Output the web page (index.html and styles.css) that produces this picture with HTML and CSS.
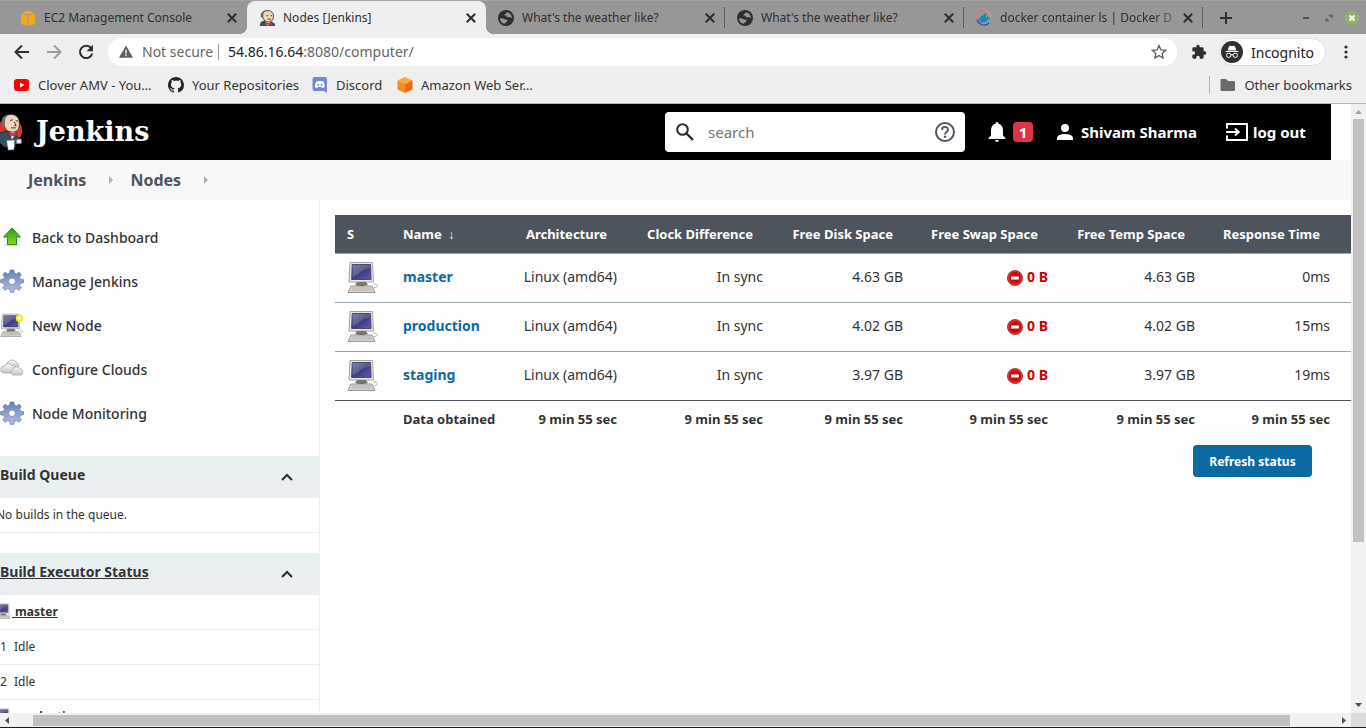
FILE: index.html
```html
<!DOCTYPE html>
<html lang="en">
<head>
<meta charset="utf-8">
<title>Nodes [Jenkins]</title>
<link rel="stylesheet" href="styles.css">
</head>
<body>
<svg class="defs" aria-hidden="true">
  <defs>
    <linearGradient id="screen" x1="0" y1="0" x2="1" y2="1"><stop offset="0" stop-color="#6a6a9c"/><stop offset=".5" stop-color="#3d3d7c"/><stop offset="1" stop-color="#5c5cb0"/></linearGradient>
    <linearGradient id="gearfill" x1="0" y1="0" x2="0" y2="1"><stop offset="0" stop-color="#6281b4"/><stop offset=".45" stop-color="#8c9cc9"/><stop offset="1" stop-color="#b9b9de"/></linearGradient>
    <linearGradient id="greenfill" x1="0" y1="0" x2="0" y2="1"><stop offset="0" stop-color="#2f9a10"/><stop offset="1" stop-color="#7edb25"/></linearGradient>
    <linearGradient id="cloudfill" x1="0" y1="0" x2="0" y2="1"><stop offset="0" stop-color="#fafafa"/><stop offset="1" stop-color="#c4c4c0"/></linearGradient>
    <linearGradient id="ring" x1="0" y1="0" x2="1" y2="1"><stop offset="0" stop-color="#e8506a"/><stop offset=".5" stop-color="#f0a080"/><stop offset="1" stop-color="#25b8b0"/></linearGradient>
  </defs>
  <symbol id="close" viewBox="0 0 10 10"><path d="M1.5 1.5l7 7M8.500 1.500l-7 7" fill="none" stroke="currentColor" stroke-width="1.700"/></symbol>
  <symbol id="globe" viewBox="0 0 24 24"><path fill="currentColor" d="M12 0a12 12 0 1 0 0 24 12 12 0 0 0 0-24z"/><path fill="#979797" d="M13 3.200c4 .4 7.500 3.800 7.900 8-1 1-2 .6-2.900-.2-1-.9-2.400.2-3.600 0-1.500-.3-1-2-2.400-2.500-1-.4-2.500.2-2.300-1.300.2-1.500 2-1 2.600-2 .3-.7.200-1.400.7-2zM3 13c1.300-.6 3-.5 4.300-.2 1.600.4 2.300 1.500 4 1.500 1.500 0 3 .6 2.700 2.200-.3 1.700-2 1.500-2.800 2.600-.4.600-.4 1.300-1 1.700C6 19.800 3 16.800 3 13z"/></symbol>
  <symbol id="computer" viewBox="0 0 32 32">
    <path d="M26 23c4 0 5 1 4 2.500s-4 .5-4 2" fill="none" stroke="#b4b4b0"/>
    <path d="M3 1.500h22.500l1 19.500H2z" fill="#e8e8e4" stroke="#a4a4a0"/>
    <path d="M5.200 3.500h18.300l.6 15H4.600z" fill="url(#screen)" stroke="#33335c" stroke-width=".8"/>
    <path d="M5.500 16C12 15 12 9 23.300 7V4H5.700z" fill="#fff" opacity=".16"/>
    <path d="M10 21h9l2 3H8z" fill="#777a72"/><path d="M8 24q6.500 2 13 0z" fill="#30322e"/>
    <path d="M4 25h21l3 6.500H1z" fill="#d6d6d2" stroke="#989894"/><path d="M5 27h19M4 29h21" stroke="#aaaaa6" stroke-width=".8"/>
  </symbol>
  <symbol id="gear" viewBox="0 0 24 24">
    <path d="M10.300 1h3.400l.6 3.100 2.100.9 2.700-1.800 2.200 2.300-1.700 2.600.9 2.100 3 .5v3l-3 .6-.9 2.200 1.700 2.600-2.300 2.200-2.600-1.700-2.100.8-.6 2.900h-3.200l-.6-2.900-2.200-.8-2.600 1.700-2.300-2.300 1.800-2.600-.9-2.100-3-.6v-3l3-.6.900-2.100-1.700-2.600L5.100 3.200 7.700 5l2-.9z" fill="url(#gearfill)" stroke="#6d7fae" stroke-width=".8"/>
    <circle cx="12" cy="12.300" r="3.300" fill="#fff" stroke="#7d8ab8" stroke-width=".8"/>
  </symbol>
  <symbol id="stop" viewBox="0 0 16 16"><circle cx="8" cy="8" r="7.600" fill="#cc0a0a" stroke="#8d0d0d" stroke-width=".6"/><circle cx="8" cy="8" r="6.500" fill="none" stroke="#ed5a5a" stroke-width=".7"/><rect x="4" y="6.500" width="8" height="3" fill="#fff"/></symbol>
  <symbol id="chevron" viewBox="0 0 14 10"><path d="M2 8l5-5 5 5" fill="none" stroke="#2b2b2b" stroke-width="2"/></symbol>
</svg>

<div class="browser">
  <div class="tabstrip">
    <div class="tab">
      <svg class="fav" viewBox="0 0 16 16"><path fill="#f5a81c" d="M1 4l6.500 1.500V16L1 14zM15 4L8.500 5.500V16l6.500-2zM2 3l6-2.500L14 3 8 4.500z"/></svg>
      <span class="tab-title">EC2 Management Console</span>
      <button class="tab-close" aria-label="Close tab"><svg><use href="#close"/></svg></button>
    </div>
    <div class="tab active">
      <svg class="fav" viewBox="1 0 28 28"><path d="M2 28l2-7 7-3 12 2 6 4v4z" fill="#335061"/><path d="M12 19l4 9 6-9z" fill="#eee"/><path d="M5 12C4 4 9 1 16 1c8 0 10.500 5 10.300 10.500C26 17 23.500 21 18 21c-6 0-8-3-9-6z" fill="#f0d6b7" stroke="#31302e" stroke-width="1.500"/><path d="M5 12C3 5 8 2 13 1.500c-4 3-5 6-4 13z" fill="#70706c"/><path d="M14 10h3M21 10h3M16 16h6" stroke="#31302e" stroke-width="1.500"/><path d="M12 21l6 2 6-2v6l-6-2-6 2z" fill="#d33833"/></svg>
      <span class="tab-title">Nodes [Jenkins]</span>
      <button class="tab-close" aria-label="Close tab"><svg><use href="#close"/></svg></button>
    </div>
    <div class="tab divided">
      <svg class="fav"><use href="#globe"/></svg>
      <span class="tab-title">What's the weather like?</span>
      <button class="tab-close" aria-label="Close tab"><svg><use href="#close"/></svg></button>
    </div>
    <div class="tab divided">
      <svg class="fav"><use href="#globe"/></svg>
      <span class="tab-title">What's the weather like?</span>
      <button class="tab-close" aria-label="Close tab"><svg><use href="#close"/></svg></button>
    </div>
    <div class="tab divided">
      <svg class="fav" viewBox="0 0 16 16"><circle cx="8" cy="8" r="7.300" fill="none" stroke="url(#ring)" stroke-width="1.200"/><path d="M1 9.500a7.200 7.200 0 0 0 12 3.500" fill="none" stroke="#3a3f8f" stroke-width="1.200"/><path fill="#1488c6" d="M2.500 8h2V6h2V5H8V3.500h2V8h1c.4-.5.300-1.300 0-2 .8.200 1.200.8 1.200 1.400.8-.1 1.300 0 1.800.4-.4.800-1 1-1.800 1-.8 2.500-2.600 3.700-5 3.700-3 0-4.500-1.500-4.700-4.500z"/></svg>
      <span class="tab-title fade">docker container ls | Docker D</span>
      <button class="tab-close" aria-label="Close tab"><svg><use href="#close"/></svg></button>
    </div>
    <button class="new-tab" aria-label="New tab"><svg viewBox="0 0 12 12"><path d="M6 0v12M0 6h12" stroke="currentColor" stroke-width="2"/></svg></button>
    <div class="window-controls">
      <button aria-label="Minimize"><svg viewBox="0 0 14 14"><path d="M4 7h6" stroke="#555" stroke-width="2"/></svg></button>
      <button aria-label="Restore"><svg viewBox="0 0 14 14"><path d="M7 4h3v3zM4 7v3h3z" fill="#626262" stroke="#626262"/></svg></button>
      <button aria-label="Close window"><svg viewBox="0 0 14 14"><circle cx="7" cy="7" r="7" fill="#8fb36b"/><path d="M4.500 4.500l5 5M9.500 4.500l-5 5" stroke="#fff" stroke-width="2"/></svg></button>
    </div>
  </div>

  <div class="toolbar">
    <button class="nav" aria-label="Back"><svg viewBox="0 0 16 16"><path d="M15 8H2M8 1.500L1.500 8 8 14.500" fill="none" stroke="#2e2e2e" stroke-width="2"/></svg></button>
    <button class="nav" aria-label="Forward" disabled><svg viewBox="0 0 16 16"><path d="M1 8h13M8 1.500L14.500 8 8 14.500" fill="none" stroke="#9c9c9c" stroke-width="2"/></svg></button>
    <button class="nav" aria-label="Reload"><svg viewBox="0 0 16 16"><path d="M13.200 4.200A6.200 6.200 0 1 0 14.200 9.500" fill="none" stroke="#2e2e2e" stroke-width="2"/><path d="M15 .8v6.400H8.600z" fill="#2e2e2e"/></svg></button>
    <div class="address">
      <svg class="warn" viewBox="0 0 16 14"><path d="M8 0l8 14H0z" fill="#5f5f5f"/><path d="M8 5v4.500M8 10.500v2" stroke="#fff" stroke-width="1.600"/></svg>
      <span class="insecure">Not secure</span>
      <div class="url" role="textbox" aria-label="Address" tabindex="0"><b>54.86.16.64</b>:8080/computer/</div>
      <button class="star" aria-label="Bookmark this page"><svg viewBox="0 0 16 16"><path d="M8 1.500l1.900 4.300 4.700.5-3.500 3.100 1 4.600L8 11.600 3.900 14l1-4.600L1.400 6.300l4.700-.5z" fill="none" stroke="#5f5f5f" stroke-width="1.300"/></svg></button>
    </div>
    <button class="puzzle" aria-label="Extensions"><svg viewBox="0 0 24 24"><path fill="#2e2e2e" d="M20.500 11H19V7a2 2 0 0 0-2-2h-4V3.500a2.500 2.500 0 0 0-5 0V5H4a2 2 0 0 0-2 2v3.800h1.500a2.700 2.700 0 0 1 0 5.400H2V20a2 2 0 0 0 2 2h3.800v-1.500a2.700 2.700 0 0 1 5.400 0V22H17a2 2 0 0 0 2-2v-4h1.500a2.500 2.500 0 0 0 0-5z"/></svg></button>
    <button class="incognito"><svg viewBox="0 0 22 22"><circle cx="11" cy="11" r="11" fill="#2f2f2f"/><path d="M8 5.500q.5-1 1.500-.7 1.500.5 3 0 1-.3 1.500.7l1.500 4h-9z" fill="#fff"/><path d="M4.500 10.500h13" stroke="#fff"/><circle cx="7.700" cy="14.300" r="2.200" fill="none" stroke="#fff"/><circle cx="14.300" cy="14.300" r="2.200" fill="none" stroke="#fff"/><path d="M9.800 14q1.200-.7 2.400 0" fill="none" stroke="#fff"/></svg><span>Incognito</span></button>
    <button class="kebab" aria-label="Menu"><svg viewBox="0 0 4 14"><g fill="#2e2e2e"><circle cx="2" cy="2" r="1.600"/><circle cx="2" cy="7" r="1.600"/><circle cx="2" cy="12" r="1.600"/></g></svg></button>
  </div>

  <nav class="bookmarks" aria-label="Bookmarks">
    <a href="#" class="bm bm-clover"><svg viewBox="0 0 16 16"><rect x="0" y="2" width="15" height="12" rx="3" fill="#f00"/><path d="M6 5.500v5L10.300 8z" fill="#fff"/></svg>Clover AMV - You…</a>
    <a href="#" class="bm bm-github"><svg viewBox="0 0 16 16"><path fill="#20262b" d="M8 0C3.600 0 0 3.600 0 8c0 3.500 2.300 6.500 5.500 7.600.4.100.5-.2.500-.4v-1.500c-2 .4-2.600-.5-2.700-1-.1-.2-.5-1-.9-1.200-.3-.1-.7-.5 0-.6.7 0 1.100.6 1.300.8.7 1.300 1.900.9 2.400.7.100-.5.300-.9.500-1.100-1.800-.2-3.600-.9-3.600-4 0-.8.300-1.500.8-2.100-.1-.2-.4-1 .1-2.100 0 0 .6-.2 2.200.8a7 7 0 0 1 4 0c1.500-1 2.200-.8 2.200-.8.400 1.100.2 1.900.1 2.100.5.600.8 1.300.8 2.100 0 3.100-1.900 3.800-3.700 4 .3.300.6.800.6 1.500v2.400c0 .2.100.5.500.4A8 8 0 0 0 16 8c0-4.400-3.600-8-8-8z"/></svg>Your Repositories</a>
    <a href="#" class="bm bm-discord"><svg viewBox="0 0 16 16"><path d="M2.500 0h10.500a2 2 0 0 1 2 2v14l-3-2H2.500a2 2 0 0 1-2-2V2a2 2 0 0 1 2-2z" fill="#7289da"/><path d="M3 9.500q0-3 1.500-5Q6 3.600 6.500 4h2.800q1.200-.4 2 .5Q12.800 7 12.700 10q-1 1-2.500 1l-.6-1H6l-.6 1Q4 11 3 10z" fill="#fff"/><circle cx="6.200" cy="7.800" r="1" fill="#7289da"/><circle cx="9.500" cy="7.800" r="1" fill="#7289da"/></svg>Discord</a>
    <a href="#" class="bm bm-aws"><svg viewBox="0 0 16 16"><path d="M8 0l7.500 3.500L8 7 .5 3.500z" fill="#ffa53b"/><path d="M.5 3.500L8 7v9L.5 12.500z" fill="#f78b1f"/><path d="M15.500 3.500L8 7v9l7.500-3.500z" fill="#ed6a1a"/></svg>Amazon Web Ser…</a>
    <a href="#" class="bm other"><svg viewBox="0 0 16 16"><path d="M1 2h5l2 2h6a1 1 0 0 1 1 1v8a1 1 0 0 1-1 1H1.500a1 1 0 0 1-1-1V3z" fill="#6b6b6b"/></svg>Other bookmarks</a>
  </nav>

  <div class="viewport">
    <div class="page">
      <header class="masthead">
        <a href="#" class="brand"><svg viewBox="6 0 26 40">
          <circle cx="16.500" cy="18.500" r="13.500" fill="#d33833"/>
          <path d="M4 22l8-3 11 2 2 5 3 1-1 5-4 1v3l-5 1-8-1-4-4z" fill="#335061" stroke="#1a252e" stroke-width=".8"/>
          <path d="M16 19l3 9 5-8z" fill="#eee"/>
          <path d="M8.500 11C8 4 13 1 18 1c6 0 9 4 9 9.500 0 6-2 9.500-6.500 9.500-6 0-8-2-9.500-6z" fill="#f0d6b7" stroke="#31302e" stroke-width=".9"/>
          <path d="M8 11C7 5 11 1.500 15 1.200c-3 3-4 5-3.600 9l-.3 4.300C9.500 14.500 8.500 13 8 11z" fill="#70706c"/>
          <path d="M17 7.500l3-.7M23 8h2.500M21.500 9l2 4h-2M18 15.500h5.500" fill="none" stroke="#31302e"/>
          <path d="M15.500 20l4.500 2 4-2.500.5 5-4.500-1-4 2z" fill="#d33833" stroke="#7a1512" stroke-width=".6"/>
          <path d="M13.500 29.500l8-.5-.5 10-6 .5z" fill="#fff" stroke="#c5d5dc" stroke-width=".5"/>
          <path d="M24 28.500l5-1v5h-5z" fill="#e4eaec" stroke="#8a979d" stroke-width=".5"/>
        </svg><span>Jenkins</span></a>
        <label class="search">
          <svg viewBox="0 0 20 20"><circle cx="7.500" cy="7.500" r="5.300" fill="none" stroke="#2b2b2b" stroke-width="2"/><path d="M11.500 11.500l6.500 6.500" stroke="#2b2b2b" stroke-width="2.400"/></svg>
          <input type="search" placeholder="search" aria-label="search">
          <svg viewBox="0 0 20 20"><circle cx="10" cy="10" r="9" fill="none" stroke="#4d545d" stroke-width="2"/><path d="M7 8c0-4 6-4 6-.3 0 2.300-3 2.300-3 4.800" fill="none" stroke="#4d545d" stroke-width="1.800"/><circle cx="10" cy="14.800" r="1.200" fill="#4d545d"/></svg>
        </label>
        <button class="alerts" aria-label="1 notification"><svg viewBox="0 0 18 20"><path d="M9 0q1.500 0 1.500 1.800Q15 3 15 8.500v5l2.500 2.500v1H.5v-1L3 13.500v-5Q3 3 7.500 1.800 7.500 0 9 0zM7 18h4q-.3 2-2 2t-2-2z" fill="#fff"/></svg><span class="count">1</span></button>
        <a href="#" class="user"><svg viewBox="0 0 16 16"><circle cx="8" cy="4" r="4" fill="#fff"/><path d="M0 16v-2.500Q1 10 8 10t8 3.500V16z" fill="#fff"/></svg>Shivam Sharma</a>
        <a href="#" class="logout"><svg viewBox="0 0 22 18"><path d="M1 5.500V1h20v16H1v-4.500" fill="none" stroke="#fff" stroke-width="2"/><path d="M0 9h12M9 5.500L12.800 9 9 12.500" fill="none" stroke="#fff" stroke-width="2"/></svg>log out</a>
      </header>

      <nav class="crumbs" aria-label="Breadcrumb"><a href="#">Jenkins</a><i></i><a href="#">Nodes</a><i></i></nav>

      <div class="columns">
        <aside class="side">
          <nav class="tasks">
            <a href="#"><svg viewBox="0 0 24 24"><ellipse cx="12" cy="20" rx="8" ry="1.500" fill="#ddd"/><path d="M12 3l8.500 9h-4v7.500h-9V12h-4z" fill="url(#greenfill)" stroke="#3a8a1a"/></svg>Back to Dashboard</a>
            <a href="#"><svg><use href="#gear"/></svg>Manage Jenkins</a>
            <a href="#"><svg viewBox="0 0 32 32"><use href="#computer" width="32" height="32"/><circle cx="26" cy="7" r="5" fill="#f7ea25"/><circle cx="26" cy="7" r="2.300" fill="#fffccc"/></svg>New Node</a>
            <a href="#"><svg viewBox="0 0 24 24"><g fill="url(#cloudfill)" stroke="#aaa" stroke-width=".8"><path d="M7 11a4 4 0 0 1 1-6 5 5 0 0 1 8 0 4 4 0 0 1 2 6z"/><path d="M4 16a3.500 3.500 0 0 1 .5-7 4.500 4.500 0 0 1 8 0 3.500 3.500 0 0 1 2 7z"/><path d="M13 18a3 3 0 0 1 0-5.500 4 4 0 0 1 7-1 3.500 3.500 0 0 1 1 6.500z"/></g></svg>Configure Clouds</a>
            <a href="#"><svg><use href="#gear"/></svg>Node Monitoring</a>
          </nav>
          <section class="pane">
            <h2>Build Queue<button aria-label="Collapse"><svg><use href="#chevron"/></svg></button></h2>
            <p class="row">No builds in the queue.</p>
          </section>
          <section class="pane">
            <h2><a href="#">Build Executor Status</a><button aria-label="Collapse"><svg><use href="#chevron"/></svg></button></h2>
            <p class="row node"><svg><use href="#computer"/></svg><a href="#">&nbsp;master</a></p>
            <p class="row executor"><span>1</span>Idle</p>
            <p class="row executor"><span>2</span>Idle</p>
            <p class="row node"><svg><use href="#computer"/></svg><a href="#">&nbsp;production</a></p>
          </section>
        </aside>

        <main class="main">
          <table class="nodes">
            <colgroup><col class="c-status"><col class="c-name"><col class="c-arch"><col class="c-clock"><col class="c-disk"><col class="c-swap"><col class="c-temp"><col></colgroup>
            <thead><tr><th>S</th><th>Name <span class="arrow">↓</span></th><th>Architecture</th><th>Clock Difference</th><th>Free Disk Space</th><th>Free Swap Space</th><th>Free Temp Space</th><th>Response Time</th></tr></thead>
            <tbody>
              <tr><td><svg class="pc"><use href="#computer"/></svg></td><td><a href="#">master</a></td><td>Linux (amd64)</td><td>In sync</td><td>4.63 GB</td><td class="low"><svg><use href="#stop"/></svg> 0 B</td><td>4.63 GB</td><td>0ms</td></tr>
              <tr><td><svg class="pc"><use href="#computer"/></svg></td><td><a href="#">production</a></td><td>Linux (amd64)</td><td>In sync</td><td>4.02 GB</td><td class="low"><svg><use href="#stop"/></svg> 0 B</td><td>4.02 GB</td><td>15ms</td></tr>
              <tr><td><svg class="pc"><use href="#computer"/></svg></td><td><a href="#">staging</a></td><td>Linux (amd64)</td><td>In sync</td><td>3.97 GB</td><td class="low"><svg><use href="#stop"/></svg> 0 B</td><td>3.97 GB</td><td>19ms</td></tr>
            </tbody>
            <tfoot><tr><td></td><td>Data obtained</td><td>9 min 55 sec</td><td>9 min 55 sec</td><td>9 min 55 sec</td><td>9 min 55 sec</td><td>9 min 55 sec</td><td>9 min 55 sec</td></tr></tfoot>
          </table>
          <div class="actions"><button class="refresh">Refresh status</button></div>
        </main>
      </div>
    </div>
    <div class="vbar" aria-hidden="true"><svg viewBox="0 0 7 4"><path d="M0 4h7L3.500 0z" fill="#a3a3a3"/></svg><div class="vtrack"><div class="vthumb"></div></div><svg viewBox="0 0 7 4"><path d="M0 0h7L3.500 4z" fill="#505050"/></svg></div>
    <div class="hbar" aria-hidden="true"><svg viewBox="0 0 4 7"><path d="M4 0v7L0 3.500z" fill="#505050"/></svg><div class="htrack"><div class="hthumb"></div></div><svg viewBox="0 0 4 7"><path d="M0 0v7l4-3.500z" fill="#505050"/></svg></div>
    <div class="corner"></div>
  </div>
</div>
</body>
</html>
```

FILE: styles.css
```css
* { box-sizing: border-box; }
body { margin: 0; font-family: "Noto Sans", "Open Sans", sans-serif; font-size: 13px; color: #333; background: #fff; overflow: hidden; }
a { color: inherit; text-decoration: none; }
button { border: 0; padding: 0; margin: 0; background: none; font: inherit; color: inherit; display: flex; align-items: center; justify-content: center; }
svg { display: block; flex: none; }
.defs { position: absolute; width: 0; height: 0; }

.browser { display: flex; flex-direction: column; height: 100vh; border-bottom: 1px solid #1c1c1c; background: #efefef; }

.tabstrip { display: flex; height: 34px; flex: none; padding-left: 8px; background: #979797; border-top: 1px solid #a3a3a3; color: #2e2e2e; }
.tab { display: flex; align-items: center; flex: 0 1 239px; min-width: 0; padding: 0 9px 0 12px; position: relative; }
.tab.active { background: #efefef; border-radius: 8px 8px 0 0; }
.tab.active::before, .tab.active::after { content: ""; position: absolute; bottom: 0; width: 8px; height: 8px; }
.tab.active::before { left: -8px; background: radial-gradient(circle at 0 0, #979797 8px, #efefef 8px); }
.tab.active::after { right: -8px; background: radial-gradient(circle at 100% 0, #979797 8px, #efefef 8px); }
.tab.divided::after { content: ""; position: absolute; right: 0; top: 6px; bottom: 6px; width: 1px; background: #5c5c5c; }
.fav { width: 16px; height: 16px; margin-right: 8px; }
.tab-title { flex: 1; min-width: 0; overflow: hidden; white-space: nowrap; font-size: 12px; padding-bottom: 1px; }
.tab-title.fade { mask-image: linear-gradient(to right, #000 88%, transparent 105%); }
.tab-close { width: 12px; height: 12px; margin-left: 6px; }
.tab-close svg { width: 12px; height: 12px; }
.new-tab { width: 46px; }
.new-tab svg { width: 12px; height: 12px; }
.window-controls { display: flex; gap: 9px; align-items: center; margin-left: auto; padding-right: 7px; }
.window-controls svg { width: 14px; height: 14px; }

.toolbar { display: flex; align-items: center; height: 36px; flex: none; padding-left: 14px; }
.nav { width: 16px; height: 20px; margin-right: 16px; }
.nav svg { width: 16px; height: 16px; }
.address { flex: 1; min-width: 0; display: flex; align-items: center; height: 28px; border-radius: 14px; background: #fff; padding: 0 10px 1px 11px; margin-right: 14px; margin-left: -2px; font-size: 14px; color: #666; }
.warn { width: 14px; height: 13px; margin-right: 9px; }
.insecure { flex: none; width: 76px; white-space: nowrap; }
.url { flex: 1; border-left: 1px solid #9a9a9a; padding-left: 9px; line-height: 16px; outline: 0; }
.url b { font-weight: 400; color: #222; }
.star svg { width: 16px; height: 16px; }
.puzzle svg { width: 16px; height: 16px; }
.incognito { margin-left: 12px; width: 107px; height: 28px; border-radius: 14px; background: #fff; border: 1px solid #ddd; justify-content: flex-start; gap: 8px; padding-left: 1px; font-size: 14px; color: #222; }
.incognito svg { width: 22px; height: 22px; }
.kebab { width: 40px; height: 28px; }
.kebab svg { width: 4px; height: 14px; }

.bookmarks { display: flex; align-items: center; height: 34px; flex: none; padding: 0 14px 3px; border-bottom: 1px solid #b5b5b5; }
.bm { display: flex; align-items: center; gap: 8px; white-space: nowrap; }
.bm svg { width: 16px; height: 16px; }
.bm-clover { width: 154px; }
.bm-github { width: 144px; }
.bm-discord { width: 85px; }
.other { margin-left: auto; padding-left: 10px; border-left: 1px solid #b5b5b5; }

.viewport { flex: 1; min-height: 0; display: grid; grid-template: minmax(0, 1fr) 14px / minmax(0, 1fr) 15px; }
.page { overflow: hidden; background: #fff; }

.masthead { display: flex; align-items: center; height: 56px; margin-right: 20px; padding-right: 24px; background: #000; color: #fff; font-size: 15px; font-weight: 700; }
.brand { display: flex; align-items: center; gap: 12px; font: 700 27px/40px "DejaVu Serif", serif; }
.brand svg { width: 24px; height: 38px; }
.search { display: flex; align-items: center; width: 300px; height: 40px; margin-left: auto; padding: 0 10px; border-radius: 4px; background: #fff; }
.search svg { width: 20px; height: 20px; }
.search input { flex: 1; min-width: 0; border: 0; outline: 0; background: none; padding: 0 13px; font: 15px "Noto Sans", sans-serif; color: #333; }
.search input::placeholder { color: #757575; }
.alerts { gap: 7px; margin-left: 23px; }
.alerts svg { width: 18px; height: 20px; }
.count { width: 20px; height: 20px; border-radius: 4px; background: #dc3545; line-height: 20px; }
.user, .logout { display: flex; align-items: center; white-space: nowrap; }
.user { gap: 8px; width: 139px; margin-left: 24px; }
.user svg { width: 16px; height: 16px; }
.logout { gap: 5px; width: 81px; margin-left: 30px; }
.logout svg { width: 22px; height: 18px; }

.crumbs { display: flex; align-items: center; height: 40px; padding-left: 28px; background: #f8f8f8; color: #4d545d; font-size: 16px; font-weight: 700; }
.crumbs i { margin: 0 17px 0 23px; border: 4px solid transparent; border-left: 4px solid #b0b0b0; border-right: 0; }

.columns { display: flex; }
.side { flex: none; width: 320px; border-right: 1px solid #eaeff2; padding-top: 15px; }
.tasks { margin-bottom: 21px; }
.tasks a { display: flex; align-items: center; gap: 8px; height: 44px; font-size: 14px; font-weight: 500; }
.tasks svg { width: 24px; height: 24px; }
.pane { margin-bottom: 20px; }
.pane h2 { display: flex; align-items: center; justify-content: space-between; height: 42px; margin: 0; padding: 0 24px 6px 0; background: #eaeff2; font-size: 14px; font-weight: 700; }
.pane h2 a, .node a { text-decoration: underline; }
.pane h2 button { width: 16px; height: 24px; padding-top: 5px; }
.pane h2 svg { width: 14px; height: 10px; }
.row { display: flex; align-items: center; height: 35px; margin: 0 0 0 -4px; padding-bottom: 2px; border-bottom: 1px solid #eaeff2; font-size: 12px; }
.node { font-weight: 700; }
.node svg { width: 16px; height: 16px; }
.executor { padding-left: 4px; }
.executor span { width: 14px; }

.main { flex: 1; min-width: 0; padding: 15px 0 0 15px; }
.nodes { width: 100%; table-layout: fixed; border-collapse: collapse; font-size: 14px; }
.c-status { width: 56px; }
.c-name, .c-arch { width: 119px; }
.c-clock { width: 146px; }
.c-disk { width: 140px; }
.c-swap { width: 145px; }
.c-temp { width: 147px; }
.nodes th, .nodes td { padding: 0 12px; white-space: nowrap; text-align: right; }
.nodes th { height: 38px; padding-right: 22px; background: #4d545d; color: #fff; font-size: 13px; font-weight: 700; }
.nodes th:nth-child(-n+2), .nodes td:nth-child(-n+2) { text-align: left; padding-right: 0; }
.nodes th:last-child { padding-right: 31px; }
.nodes td:last-child { padding-right: 21px; }
.nodes tbody td { height: 49px; padding-bottom: 2px; border-top: 1px solid #98a6ae; }
.nodes td a { color: #0b6aa2; font-weight: 700; }
.nodes tfoot td { height: 38px; border-top: 1px solid #4d545d; font-size: 13px; font-weight: 700; }
.arrow { margin-left: 3px; font-size: 12px; }
.pc { width: 32px; height: 32px; }
.nodes .low { color: #c00; font-weight: 700; }
.low svg { display: inline-block; width: 16px; height: 16px; vertical-align: middle; }
.actions { display: flex; justify-content: flex-end; padding: 7px 39px 0 0; }
.refresh { width: 119px; height: 32px; border-radius: 4px; background: #0b6aa2; color: #fff; font-size: 12px; font-weight: 700; }

.vbar, .hbar { display: flex; align-items: center; background: #f1f1f1; }
.vbar { flex-direction: column; padding: 6px 0; }
.vbar svg { width: 7px; height: 4px; }
.vtrack { flex: 1; width: 11px; padding: 5px 0; }
.vthumb { height: 73%; background: #c1c1c1; }
.hbar { padding: 0 5px; }
.hbar svg { width: 4px; height: 7px; }
.htrack { flex: 1; height: 11px; padding-left: 24px; }
.hthumb { width: 96%; height: 11px; background: #c1c1c1; }
.corner { background: #dcdcdc; }
```
